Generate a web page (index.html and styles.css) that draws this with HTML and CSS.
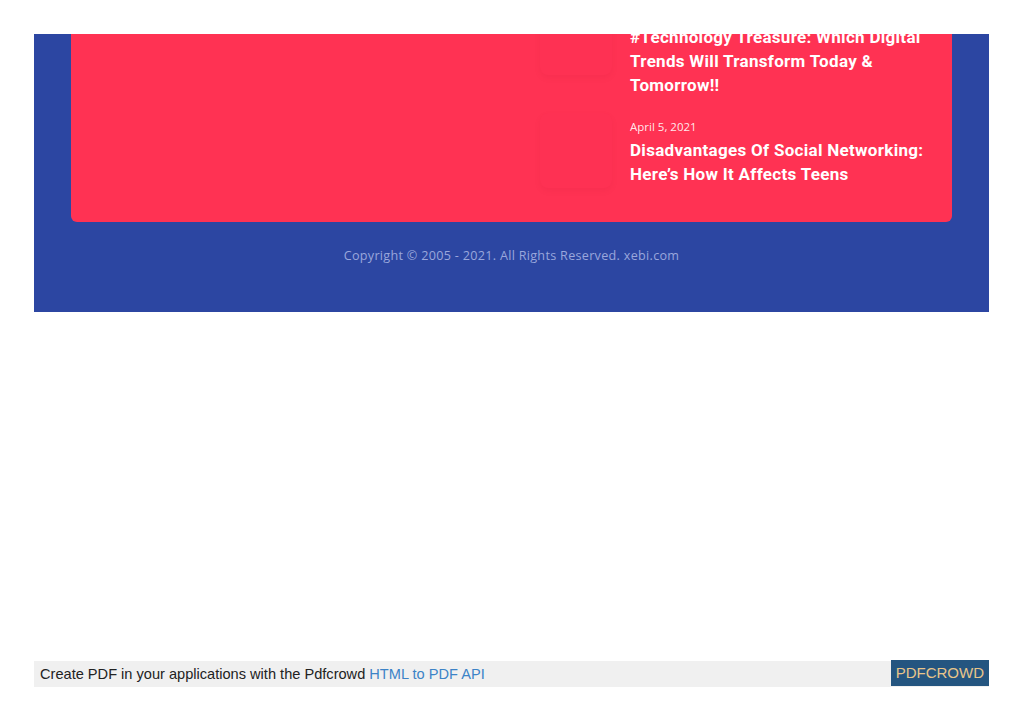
FILE: index.html
```html
<!DOCTYPE html>
<html lang="en">
<head>
    <meta charset="UTF-8">
    <meta name="viewport" content="width=device-width, initial-scale=1.0">
    <title>xebi.com</title>
    <link rel="stylesheet" href="styles.css">
</head>
<body>
    <div class="sheet">
        <footer class="site-footer">
            <div class="card">
                <div class="card-left"></div>
                <div class="posts">
                    <div class="post">
                        <div class="thumb"></div>
                        <div class="post-text">
                            <p class="date">April 5, 2021</p>
                            <h3>#Technology Treasure: Which Digital Trends Will Transform Today &amp; Tomorrow!!</h3>
                        </div>
                    </div>
                    <div class="post">
                        <div class="thumb"></div>
                        <div class="post-text">
                            <p class="date">April 5, 2021</p>
                            <h3>Disadvantages Of Social Networking: Here’s How It Affects Teens</h3>
                        </div>
                    </div>
                </div>
            </div>
            <p class="copyright">Copyright © 2005 - 2021. All Rights Reserved. xebi.com</p>
        </footer>
    </div>

    <div class="pdf-bar">
        <p>Create PDF in your applications with the Pdfcrowd <a href="#">HTML to PDF API</a></p>
        <span class="pdf-brand">PDFCROWD</span>
    </div>
</body>
</html>
```

FILE: styles.css
```css
body { margin: 0; padding: 34px 34px 0; background: #fff; font-family: "Liberation Sans", Arial, sans-serif; }
.sheet { overflow: hidden; height: 278px; }
.site-footer { background: #2c46a2; margin-top: -60px; padding-bottom: 60px; }
.card { background: #ff3253; margin: 0 37px; border-radius: 6px; padding: 26px 20px 34px 30px; display: grid; grid-template-columns: 1fr 392px; }
.post { display: flex; gap: 18px; align-items: flex-start; }
.post + .post { margin-top: 16px; }
.thumb { width: 72px; height: 75px; flex: none; border-radius: 8px; background: #fe3153; box-shadow: 0 3px 6px rgba(150, 20, 40, 0.07); }
.post-text { padding-top: 6px; color: #fff; }
.date { margin: 0 0 3px; font-family: "Open Sans", sans-serif; font-size: 11.5px; line-height: 16px; color: rgba(255, 255, 255, 0.9); }
.post-text h3 { margin: 0; font-family: Roboto, sans-serif; font-weight: 700; font-size: 17px; line-height: 24px; letter-spacing: 0.3px; }
.copyright { margin: 26px 0 0; text-align: center; font-family: "Open Sans", sans-serif; font-size: 12.6px; line-height: 16px; color: #9aa7dc; letter-spacing: 0.3px; }
.pdf-bar { display: flex; justify-content: space-between; align-items: center; margin-top: 349px; background: #f0f0f0; height: 26px; }
.pdf-bar p { margin: 0 0 0 6px; font-size: 14.6px; color: #222; }
.pdf-bar a { color: #3c83c7; text-decoration: none; }
.pdf-brand { background: #245580; color: #e9c58a; font-size: 15px; height: 26px; line-height: 26px; padding: 0 5px; margin-top: -2px; }
```
